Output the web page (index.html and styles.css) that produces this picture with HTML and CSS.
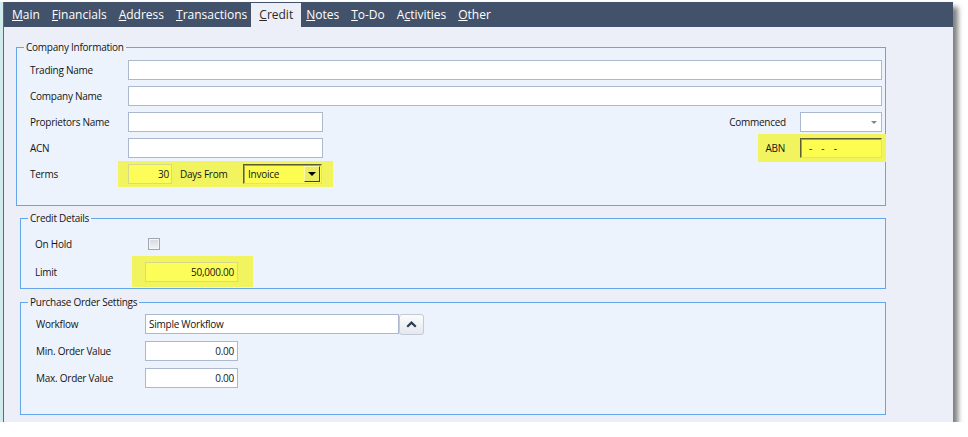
FILE: index.html
```html
<!DOCTYPE html>
<html lang="en">
<head>
  <meta charset="UTF-8" />
  <title>Customer - Credit</title>
  <link rel="stylesheet" href="styles.css">
</head>
<body>
  <div class="window">
    <div class="frame">
      <nav class="tabs">
        <span class="tab"><u>M</u>ain</span>
        <span class="tab"><u>F</u>inancials</span>
        <span class="tab"><u>A</u>ddress</span>
        <span class="tab"><u>T</u>ransactions</span>
        <span class="tab active"><u>C</u>redit</span>
        <span class="tab"><u>N</u>otes</span>
        <span class="tab"><u>T</u>o-Do</span>
        <span class="tab">A<u>c</u>tivities</span>
        <span class="tab"><u>O</u>ther</span>
      </nav>

      <div class="page">
        <fieldset class="group company">
          <legend>Company Information</legend>
          <div class="rows">
            <div class="row">
              <label class="lbl">Trading Name</label>
              <div class="field wide"></div>
            </div>
            <div class="row">
              <label class="lbl">Company Name</label>
              <div class="field wide"></div>
            </div>
            <div class="row">
              <label class="lbl">Proprietors Name</label>
              <div class="field mid"></div>
              <div class="side">
                <label>Commenced</label>
                <div class="field combo"><span class="arrow"></span></div>
              </div>
            </div>
            <div class="row">
              <label class="lbl">ACN</label>
              <div class="field mid"></div>
              <div class="side hl abn">
                <label>ABN</label>
                <div class="field sunken mask">-    -    -</div>
              </div>
            </div>
            <div class="row">
              <label class="lbl">Terms</label>
              <div class="hl terms">
                <div class="field num yellow days">30</div>
                <span class="days-from">Days From</span>
                <div class="field sunken select">Invoice<span class="drop"></span></div>
              </div>
            </div>
          </div>
        </fieldset>

        <fieldset class="group credit">
          <legend>Credit Details</legend>
          <div class="rows">
            <div class="row">
              <label class="lbl">On Hold</label>
              <span class="check"></span>
            </div>
            <div class="row">
              <label class="lbl">Limit</label>
              <div class="hl limit">
                <div class="field num yellow amount">50,000.00</div>
              </div>
            </div>
          </div>
        </fieldset>

        <fieldset class="group po">
          <legend>Purchase Order Settings</legend>
          <div class="rows">
            <div class="row">
              <label class="lbl">Workflow</label>
              <div class="field text workflow">Simple Workflow</div>
              <button class="up-btn">
                <svg width="11" height="7" viewBox="0 0 11 7"><path d="M1.2 5.8 L5.5 1.6 L9.8 5.8" fill="none" stroke="#2d3b52" stroke-width="2.2"/></svg>
              </button>
            </div>
            <div class="row">
              <label class="lbl">Min. Order Value</label>
              <div class="field num amount">0.00</div>
            </div>
            <div class="row">
              <label class="lbl">Max. Order Value</label>
              <div class="field num amount">0.00</div>
            </div>
          </div>
        </fieldset>
      </div>
    </div>
  </div>
</body>
</html>
```

FILE: styles.css
```css
body {
  margin: 0;
  background: #fff;
  font-family: "Open Sans", "Noto Sans", sans-serif;
  font-size: 10px;
  letter-spacing: -0.25px;
  color: #141414;
}
.window {
  width: 953px;
  height: 420px;
  margin-top: 2px;
  box-sizing: border-box;
  background: #eceff8;
  border-left: 3px solid #d2ecee;
  box-shadow: 5px 5px 5px rgba(0, 0, 0, 0.5);
}
.frame {
  height: 100%;
  border-left: 1px solid #586c78;
  display: flex;
  flex-direction: column;
}
.tabs {
  display: flex;
  align-items: flex-end;
  height: 25px;
  background: #42526b;
  padding-left: 2px;
}
.tab {
  padding: 0 6px;
  line-height: 24px;
  color: #fff;
  font-size: 12px;
  letter-spacing: 0;
}
.tab.active {
  background: #eceff8;
  color: #2a2a2a;
  padding: 0 8px;
  margin: 0 -1px 0 -2px;
}
.page {
  flex: 1;
  padding: 13px 0 0 12px;
}
.group {
  margin: 0;
  padding: 6px 3px 21px 0;
  border: 1px solid #63a6ec;
  background: #edf3fc;
  box-sizing: border-box;
  width: 870px;
  min-width: 0;
}
.group legend {
  margin-left: 7px;
  padding: 0 2px;
  line-height: 14px;
}
.rows {
  display: flex;
  flex-direction: column;
  gap: 6px;
  padding-left: 13px;
}
.row {
  display: flex;
  align-items: center;
  height: 20px;
}
.lbl {
  width: 98px;
  flex: none;
}
.field {
  height: 20px;
  box-sizing: border-box;
  border: 1px solid #abb8cd;
  background: #fff;
  display: flex;
  align-items: center;
}
.wide {
  flex: 1;
}
.mid {
  width: 195px;
}
.side {
  margin-left: auto;
  display: flex;
  align-items: center;
}
.side label {
  margin-right: 14px;
}
.side .field {
  width: 82px;
}
.combo {
  justify-content: flex-end;
  padding-right: 4px;
}
.arrow {
  border-left: 3px solid transparent;
  border-right: 3px solid transparent;
  border-top: 3px solid #7c8590;
}

/* yellow highlight boxes */
.hl {
  background: #f1f45e;
  display: flex;
  align-items: center;
}
.abn {
  margin: -4px -4px -4px auto;
  padding: 4px 4px 4px 7px;
}
.abn label {
  margin-right: 15px;
}
.terms {
  margin: -3px -11px -3px -10px;
  padding: 3px 11px 3px 10px;
}
.limit {
  margin: -6px -15px -5px -13px;
  padding: 6px 15px 5px 13px;
}
.yellow {
  background: #fcfd58;
  border-color: #d6d88c;
}
.sunken {
  background: #fcfd50;
  border-color: #5e5e30 #e2e272 #e2e272 #5e5e30;
  box-shadow: inset 1px 1px 0 #a4a44a;
}
.mask {
  white-space: pre;
  padding-left: 8px;
}
.num {
  justify-content: flex-end;
  padding-right: 3px;
}
.days {
  width: 44px;
  padding-right: 2px;
}
.days-from {
  width: 56px;
  margin: 0 7px 0 8px;
}
.select {
  width: 79px;
  padding: 0 1px 0 4px;
}
.drop {
  margin-left: auto;
  width: 16px;
  height: 16px;
  box-sizing: border-box;
  border: 1px solid;
  border-color: #fafaa8 #3e3e28 #3e3e28 #fafaa8;
  background: #ecec62;
  display: flex;
  align-items: center;
  justify-content: center;
}
.drop::before {
  content: "";
  border-left: 4px solid transparent;
  border-right: 4px solid transparent;
  border-top: 4px solid #000;
}

/* credit details */
.credit {
  margin: 5px 0 0 4px;
  width: 866px;
  padding: 9px 3px 6px 0;
}
.credit .rows {
  padding-left: 14px;
  gap: 8px;
}
.credit .lbl {
  width: 110px;
}
.check {
  width: 12px;
  height: 12px;
  margin-left: 3px;
  box-sizing: border-box;
  border: 1px solid #9ea6b0;
  background: linear-gradient(#d4d8de, #f2f4f7);
  box-shadow: inset 0 0 0 1px #f4f5f7;
}
.amount {
  width: 93px;
}

/* purchase order settings */
.po {
  margin: 6px 0 0 4px;
  width: 866px;
  padding: 5px 3px 26px 0;
}
.po .rows {
  padding-left: 15px;
  gap: 7px;
}
.po .lbl {
  width: 109px;
}
.workflow {
  width: 254px;
  padding-left: 3px;
}
.up-btn {
  width: 25px;
  height: 21px;
  padding: 0;
  border: 1px solid #c3cad6;
  border-radius: 3px;
  background: linear-gradient(#fbfcfd, #e4e8ee);
  display: flex;
  align-items: center;
  justify-content: center;
}
```
